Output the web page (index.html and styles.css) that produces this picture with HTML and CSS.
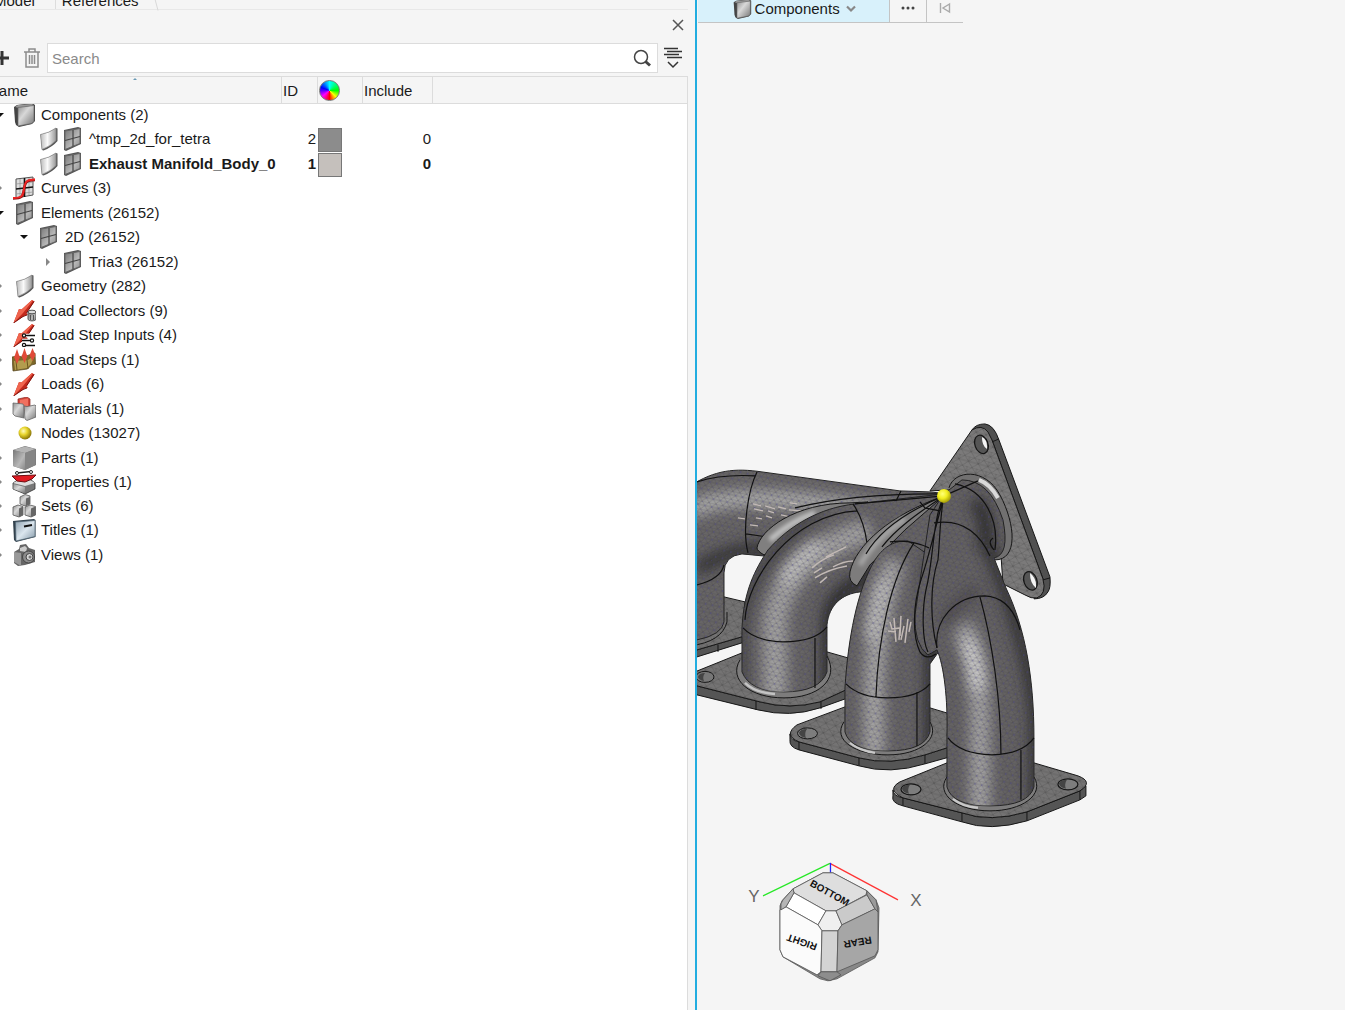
FILE: index.html
```html
<!DOCTYPE html>
<html lang="en">
<head>
  <meta charset="UTF-8">
  <meta name="viewport" content="width=device-width, initial-scale=1">
  <title>Model Browser</title>
  <link rel="stylesheet" href="styles.css">
</head>
<body>

<!-- icon sprite -->
<svg class="sprite" aria-hidden="true">
  <defs>
    <linearGradient id="steel" x1="0" y1="0" x2="1" y2="1">
      <stop offset="0" stop-color="#909090"/><stop offset=".4" stop-color="#d8d8d8"/><stop offset="1" stop-color="#747474"/>
    </linearGradient>
    <linearGradient id="plate" x1="0" y1="0" x2="1" y2="1">
      <stop offset="0" stop-color="#777"/><stop offset=".6" stop-color="#b8b8b8"/><stop offset="1" stop-color="#888"/>
    </linearGradient>
    <linearGradient id="sheet" x1="0" y1="0" x2="1" y2="0">
      <stop offset="0" stop-color="#bbb"/><stop offset=".45" stop-color="#fafafa"/><stop offset="1" stop-color="#999"/>
    </linearGradient>
    <linearGradient id="blue" x1="0" y1="0" x2="1" y2="1">
      <stop offset="0" stop-color="#8fa2b0"/><stop offset=".5" stop-color="#dbe6ee"/><stop offset="1" stop-color="#8296a5"/>
    </linearGradient>
    <radialGradient id="gold" cx=".38" cy=".35" r=".65">
      <stop offset="0" stop-color="#fffbc0"/><stop offset=".45" stop-color="#e8d52c"/><stop offset="1" stop-color="#8a7608"/>
    </radialGradient>
  </defs>
  <symbol id="i-component" viewBox="0 0 24 24">
    <path d="M2 4 5 2l15-2 3 2v16l-3 3-13 3-3-2-1-3z" fill="#444"/>
    <path d="M3 4l3-2L20 1l2 1.500L7 5z" fill="#999"/>
    <path d="M6 4.500 22 2.500v16L19.500 20.500 6 23z" fill="url(#steel)" stroke="#666" stroke-width=".7"/>
  </symbol>
  <symbol id="i-surface" viewBox="0 0 24 24">
    <path d="M4.500 7.500Q13 6 20 1l1.500.5V14q-5 6-14 9.500l-1.500-.5z" fill="#555"/>
    <path d="M4.500 7.500Q13 6 20 1v12.500q-5 5.500-14 9z" fill="url(#sheet)" stroke="#888" stroke-width=".7"/>
  </symbol>
  <symbol id="i-mesh" viewBox="0 0 24 24">
    <path d="M4 3 18 0l3 1v16L6 24l-2-1z" fill="#555"/>
    <path d="M5 4 20 1.500v15L5 22.500z" fill="url(#plate)" stroke="#666"/>
    <path d="M13 3v16.500M5 13.500l15-4" stroke="#444" stroke-width="1.200"/>
  </symbol>
  <symbol id="i-curve" viewBox="0 0 24 24">
    <path d="M4 3 21 1v18L4 22z" fill="#ddd" stroke="#555"/>
    <path d="M8 3v18M17 2v17M4 8l17-2M4 18l17-2" stroke="#999" stroke-width=".8"/>
    <path d="M12.500 2v19M4 13l17-2" stroke="#111" stroke-width="1.600"/>
    <path d="M1 22.500c9 0 10-2 11-9S14 4 23 4" fill="none" stroke="#811" stroke-width="2.600"/>
    <path d="M1 22c9 0 10-2 11-9S14 3.500 23 3.500" fill="none" stroke="#e22" stroke-width="1.800"/>
  </symbol>
  <symbol id="i-load" viewBox="0 0 24 24">
    <path d="M20 1l2.500 1.500L14.500 14l1.500 1.500-4 1.500L1.500 24 7 10l2.500.500z" fill="#c3291c"/>
    <path d="M20 1l1 .5L11 14 1.500 24 7 10l2.500.500z" fill="#f0654f"/>
    <path d="M22 2.500 14.500 14M15 16l-4 1.500L1.500 24" fill="none" stroke="#7d1510"/>
  </symbol>
  <symbol id="i-loadcol" viewBox="0 0 24 24">
    <use href="#i-load"/>
    <path d="M16 13v7c0 2.500 8 2.500 8 0v-7z" fill="url(#plate)" stroke="#555"/>
    <ellipse cx="20" cy="13" rx="4" ry="1.800" fill="#ddd" stroke="#555"/>
    <path d="M18.500 16v5M21.500 16v5" stroke="#555"/>
  </symbol>
  <symbol id="i-loadinput" viewBox="0 0 24 24">
    <use href="#i-load"/>
    <path d="M12 12.500h11M10 17.500h12M12 22.500h11" stroke="#fff" stroke-width="3.500"/>
    <path d="M12 12.500h11M10 17.500h12M12 22.500h11" stroke="#111" stroke-width="1.600"/>
    <g fill="#fff" stroke="#111" stroke-width="1.200"><circle cx="12" cy="12.500" r="1.600"/><circle cx="20" cy="17.500" r="1.600"/><circle cx="12" cy="22" r="1.600"/></g>
  </symbol>
  <symbol id="i-loadstep" viewBox="0 0 24 24">
    <path d="M0 9l5-1 6 1 6-2 6-2 .5 11-4 1-4 4L1 23z" fill="#7d6829" stroke="#55441a" stroke-width=".7"/>
    <path d="M2 13l14-1 7-5-4 9-4 4-12 2z" fill="#b39c4e"/>
    <path d="M15 12l1 9M4 13l1 9" stroke="#6b5720"/>
    <path d="M5 1l2 6 1 2-3 7-3-7 1-2zM12.500 0l2 6 1 2-3 7-3-7 1-2zM20.500 0l2 5 1 2-3 6-3-6 1-2z" fill="#e04a38"/>
  </symbol>
  <symbol id="i-material" viewBox="0 0 24 24">
    <path d="M6 2l9-2 3 2V14H6z" fill="#d4463a" stroke="#8b231c" stroke-width=".7"/>
    <path d="M8 3l8-1.500V9H8z" fill="#f0705f"/>
    <path d="M1 6l10 1 1 2v12l-9-2-2-2z" fill="url(#steel)" stroke="#666" stroke-width=".8"/>
    <path d="M12 9l3 .5 8-1.500 1 1v11l-9 3.500-2-1.500z" fill="url(#steel)" stroke="#666" stroke-width=".8"/>
  </symbol>
  <symbol id="i-node" viewBox="0 0 24 24"><circle cx="13" cy="12" r="6.500" fill="url(#gold)"/></symbol>
  <symbol id="i-part" viewBox="0 0 24 24">
    <path d="M1 4 13 0l11 3v16l-11 5L1 20z" fill="#777"/>
    <path d="M1 4 13 .5 23.500 3 13 7z" fill="#b4b4b4"/>
    <path d="M1 4l12 3v17L1 20z" fill="url(#plate)"/>
    <path d="M13 7l10.500-4v16L13 24z" fill="#858585"/>
  </symbol>
  <symbol id="i-property" viewBox="0 0 24 24">
    <path d="M1 13l6-4h11l5 4v6l-10 5-12-5z" fill="#777" stroke="#333" stroke-width=".8"/>
    <path d="M1 13l12 3 10-3-5-3H7z" fill="#ddd"/>
    <path d="M1.500 14 13 17v6.500L1.500 19z" fill="url(#steel)"/>
    <path d="M0 6l24-1-4 4-7 3-8-1z" fill="#e01b22" stroke="#6a0d10"/>
    <path d="M5 3l14-1.500" stroke="#222" stroke-width="1.500"/>
    <circle cx="5" cy="3" r="1.500" fill="#fff" stroke="#222"/><circle cx="19" cy="2" r="1.500" fill="#fff" stroke="#222"/>
  </symbol>
  <symbol id="i-set" viewBox="0 0 24 24">
    <g stroke="#555" stroke-width=".8">
      <path d="M8 3l5-2.500 5 1.500V10l-5 2-5-2z" fill="url(#steel)"/>
      <path d="M1 13l5-2 5 1.500V21l-4 2-6-2z" fill="url(#steel)"/>
      <path d="M13 13l5-2 5.500 1.500V21L19 23l-6-2z" fill="url(#steel)"/>
    </g>
    <path d="M14 4.500 18 3v7l-4 2zM7 14.500l4-2V21l-4 2zM19 14.500l4.500-2V21L19 23z" fill="#666"/>
  </symbol>
  <symbol id="i-title" viewBox="0 0 24 24">
    <path d="M1 3 22 1l1.500 1v17L4 24l-2-2z" fill="#33424d"/>
    <path d="M3.500 4 23 2.500v16L4 23z" fill="url(#blue)" stroke="#536776" stroke-width=".7"/>
    <path d="M12 8.500l8-1.500" stroke="#111" stroke-width="2.200"/>
  </symbol>
  <symbol id="i-view" viewBox="0 0 24 24">
    <path d="M2 9l5-3 1-4 6-1 3 4 6 2v12l-10 3L6 23l-4-3z" fill="#666"/>
    <path d="M2 9l7 1v13l-7-4z" fill="#999"/>
    <path d="M8 5l5-2 2 2-1 4-6-1z" fill="#ccc"/>
    <circle cx="16.500" cy="14" r="6" fill="#8c8c8c" stroke="#444"/>
    <circle cx="17.500" cy="14" r="3.500" fill="#d5d5d5" stroke="#444"/>
    <circle cx="18" cy="14" r="1.500" fill="#777"/>
  </symbol>
</svg>

<div class="app">
  <section class="browser">
    <nav class="tabs">
      <button type="button" class="tab tab-active">Model</button>
      <button type="button" class="tab">References</button>
      <svg class="tab-edge" width="10" height="31" viewBox="0 0 10 31"><path d="M1 0l8 30.500" fill="none" stroke="#d8d8d8"/></svg>
    </nav>
    <div class="titlebar">
      <button type="button" class="icon-btn" aria-label="Close">
        <svg width="12" height="12" viewBox="0 0 12 12"><path d="M1 1l10 10M11 1 1 11" stroke="#555" stroke-width="1.500"/></svg>
      </button>
    </div>
    <div class="search-row">
      <button type="button" class="icon-btn" aria-label="Create">
        <svg width="20" height="20" viewBox="0 0 20 20"><path d="M3 10h14M10 3v14" stroke="#333" stroke-width="3"/></svg>
      </button>
      <button type="button" class="icon-btn" aria-label="Delete">
        <svg width="18" height="20" viewBox="0 0 18 20" fill="none" stroke="#8c8c8c" stroke-width="1.500"><path d="M1 4h16M6 4V1h6v3M3 4v15h12V4M6.500 7v9M9 7v9M11.500 7v9"/></svg>
      </button>
      <div class="search-box">
        <input type="text" class="search-input" placeholder="Search" aria-label="Search">
        <svg width="18" height="18" viewBox="0 0 18 18" fill="none" stroke="#444"><circle cx="8" cy="8" r="6.500" stroke-width="1.500"/><path d="M12.500 12.500l4.500 4" stroke-width="3"/></svg>
      </div>
      <button type="button" class="icon-btn" aria-label="Filter">
        <svg width="18" height="22" viewBox="0 0 18 22" fill="none" stroke="#333" stroke-width="1.500"><path d="M0 1.500h14M3 4.500h15M0 7.500h15M3 10.500h15M4 15l5 5 5-5"/></svg>
      </button>
    </div>
    <div class="tree-pane">
      <table class="tree">
        <colgroup><col class="col-name"><col class="col-id"><col class="col-color"><col class="col-include"><col></colgroup>
        <thead>
          <tr>
            <th class="th-name">Name<span class="sort-mark"></span></th>
            <th>ID</th>
            <th aria-label="Color"><span class="color-wheel"></span></th>
            <th>Include</th>
            <th></th>
          </tr>
        </thead>
        <tbody>
          <tr><td><div class="node"><i class="arrow arrow-open"></i><svg class="icon"><use href="#i-component"/></svg><span class="label">Components (2)</span></div></td><td></td><td></td><td></td><td></td></tr>
          <tr><td><div class="node level-1"><i class="arrow"></i><svg class="icon"><use href="#i-surface"/></svg><svg class="icon"><use href="#i-mesh"/></svg><span class="label">^tmp_2d_for_tetra</span></div></td><td class="num">2</td><td><span class="swatch swatch-gray"></span></td><td class="num">0</td><td></td></tr>
          <tr class="current"><td><div class="node level-1"><i class="arrow"></i><svg class="icon"><use href="#i-surface"/></svg><svg class="icon"><use href="#i-mesh"/></svg><span class="label">Exhaust Manifold_Body_0</span></div></td><td class="num">1</td><td><span class="swatch swatch-tan"></span></td><td class="num">0</td><td></td></tr>
          <tr><td><div class="node"><i class="arrow arrow-closed"></i><svg class="icon"><use href="#i-curve"/></svg><span class="label">Curves (3)</span></div></td><td></td><td></td><td></td><td></td></tr>
          <tr><td><div class="node"><i class="arrow arrow-open"></i><svg class="icon"><use href="#i-mesh"/></svg><span class="label">Elements (26152)</span></div></td><td></td><td></td><td></td><td></td></tr>
          <tr><td><div class="node level-1"><i class="arrow arrow-open"></i><svg class="icon"><use href="#i-mesh"/></svg><span class="label">2D (26152)</span></div></td><td></td><td></td><td></td><td></td></tr>
          <tr><td><div class="node level-2"><i class="arrow arrow-closed"></i><svg class="icon"><use href="#i-mesh"/></svg><span class="label">Tria3 (26152)</span></div></td><td></td><td></td><td></td><td></td></tr>
          <tr><td><div class="node"><i class="arrow arrow-closed"></i><svg class="icon"><use href="#i-surface"/></svg><span class="label">Geometry (282)</span></div></td><td></td><td></td><td></td><td></td></tr>
          <tr><td><div class="node"><i class="arrow arrow-closed"></i><svg class="icon"><use href="#i-loadcol"/></svg><span class="label">Load Collectors (9)</span></div></td><td></td><td></td><td></td><td></td></tr>
          <tr><td><div class="node"><i class="arrow arrow-closed"></i><svg class="icon"><use href="#i-loadinput"/></svg><span class="label">Load Step Inputs (4)</span></div></td><td></td><td></td><td></td><td></td></tr>
          <tr><td><div class="node"><i class="arrow arrow-closed"></i><svg class="icon"><use href="#i-loadstep"/></svg><span class="label">Load Steps (1)</span></div></td><td></td><td></td><td></td><td></td></tr>
          <tr><td><div class="node"><i class="arrow arrow-closed"></i><svg class="icon"><use href="#i-load"/></svg><span class="label">Loads (6)</span></div></td><td></td><td></td><td></td><td></td></tr>
          <tr><td><div class="node"><i class="arrow arrow-closed"></i><svg class="icon"><use href="#i-material"/></svg><span class="label">Materials (1)</span></div></td><td></td><td></td><td></td><td></td></tr>
          <tr><td><div class="node"><i class="arrow"></i><svg class="icon"><use href="#i-node"/></svg><span class="label">Nodes (13027)</span></div></td><td></td><td></td><td></td><td></td></tr>
          <tr><td><div class="node"><i class="arrow arrow-closed"></i><svg class="icon"><use href="#i-part"/></svg><span class="label">Parts (1)</span></div></td><td></td><td></td><td></td><td></td></tr>
          <tr><td><div class="node"><i class="arrow arrow-closed"></i><svg class="icon"><use href="#i-property"/></svg><span class="label">Properties (1)</span></div></td><td></td><td></td><td></td><td></td></tr>
          <tr><td><div class="node"><i class="arrow arrow-closed"></i><svg class="icon"><use href="#i-set"/></svg><span class="label">Sets (6)</span></div></td><td></td><td></td><td></td><td></td></tr>
          <tr><td><div class="node"><i class="arrow arrow-closed"></i><svg class="icon"><use href="#i-title"/></svg><span class="label">Titles (1)</span></div></td><td></td><td></td><td></td><td></td></tr>
          <tr><td><div class="node"><i class="arrow arrow-closed"></i><svg class="icon"><use href="#i-view"/></svg><span class="label">Views (1)</span></div></td><td></td><td></td><td></td><td></td></tr>
        </tbody>
      </table>
    </div>
  </section>

  <main class="viewport">
    <div class="toolbar">
      <button type="button" class="tool tool-entity">
        <svg class="tool-icon"><use href="#i-component"/></svg>
        Components
        <svg width="10" height="8" viewBox="0 0 10 8"><path d="M1 1.500l4 4 4-4" fill="none" stroke="#888" stroke-width="2.200"/></svg>
      </button>
      <button type="button" class="tool" aria-label="More options">
        <svg width="14" height="4" viewBox="0 0 14 4" fill="#444"><circle cx="2" cy="2" r="1.500"/><circle cx="7" cy="2" r="1.500"/><circle cx="12" cy="2" r="1.500"/></svg>
      </button>
      <button type="button" class="tool" aria-label="Reset selection">
        <svg width="12" height="12" viewBox="0 0 12 12" fill="none" stroke="#aaa" stroke-width="1.400"><path d="M1.500 1v10M10.500 2 4 6l6.500 4z"/></svg>
      </button>
    </div>

    <svg class="canvas" viewBox="697 23 648 987" preserveAspectRatio="xMinYMin meet">
      <defs>
        <pattern id="mesh" width="7" height="8" patternUnits="userSpaceOnUse" patternTransform="rotate(12)">
          <path d="M0 0h7M0 4h7M0 0l3.500 4L7 0M0 8l3.500-4L7 8" fill="none" stroke="#2c2a2a" stroke-width=".5" opacity=".45"/>
          <path d="M3 4h1.500M0 0h1" stroke="#5b52c8" stroke-width=".9" opacity=".6"/>
        </pattern>
        <pattern id="mesh-flat" width="10" height="10" patternUnits="userSpaceOnUse" patternTransform="rotate(15)">
          <path d="M0 0h10M0 5h10M0 0l5 5 5-5M0 10l5-5 5 5M5 0v5" fill="none" stroke="#333" stroke-width=".5" opacity=".45"/>
        </pattern>
        <radialGradient id="ball" cx=".4" cy=".35" r=".65">
          <stop offset="0" stop-color="#ffff7a"/><stop offset=".5" stop-color="#f2ee20"/><stop offset="1" stop-color="#a39b0a"/>
        </radialGradient>
        <filter id="soft" filterUnits="userSpaceOnUse" x="640" y="400" width="500" height="500"><feGaussianBlur stdDeviation="7"/></filter>
        <filter id="soft-thin" filterUnits="userSpaceOnUse" x="640" y="400" width="500" height="500"><feGaussianBlur stdDeviation="2"/></filter>

        <path id="outlet-face" d="M930 491 972 430Q982 424 988 432L992 440 1043 579Q1047 594 1037 598 1031 599 1025 595L1003 584 1000 540 985 500 950 490z"/>
        <path id="flange-a" d="M690 590 724 597 745 602V636L697 650H690z"/>
        <path id="flange-b" d="M690 674 742 653 827 652 848 658V689L820 702Q790 710 760 702L697 686z"/>
        <path id="flange-c" d="M797 725 845 707 930 708 950 714V747L925 755Q890 766 859 758L799 742Q783 735 797 725z"/>
        <path id="flange-d" d="M900 782 947 763 1034 763 1078 776Q1094 782 1080 791L1027 812Q990 823 962 813L903 798Q886 790 900 782z"/>

        <path id="pipe-a" d="M690 486C715 470 735 468 762 472L900 491 930 492 948 494 900 530 763 556 742 554Q724 556 724 573V622Q722 635 697 640H690z"/>
        <path id="pipe-b" d="M742 672V628C744 590 755 570 768 550 790 525 820 508 855 504L944 494 925 560 880 592 860 592C842 594 829 605 827 625V672Q820 692 784 692 750 692 742 672z"/>
        <path id="pipe-c" d="M845 732V688C848 640 857 590 875 560 885 545 895 541 908 541L936 560 940 650 930 664V732Q925 751 888 751 850 751 845 732z"/>
        <path id="pipe-d" d="M947 787V735C948 700 944 665 937 650L928 655Q914 645 915 615L930 515 944 494 962 480Q990 480 1003 520 1010 555 994 558L1006 588C1026 630 1034 680 1034 738V787Q1029 806 990 806 952 806 947 787z"/>
        <clipPath id="clip-a"><use href="#pipe-a"/></clipPath>
        <clipPath id="clip-b"><use href="#pipe-b"/></clipPath>
        <clipPath id="clip-c"><use href="#pipe-c"/></clipPath>
        <clipPath id="clip-d"><use href="#pipe-d"/></clipPath>
      </defs>

      <!-- outlet flange -->
      <g stroke="#161616" stroke-linejoin="round">
        <path d="M972 430Q976 424 985 424 994 425 999 440L1050 577Q1051 588 1048 592 1044 599 1034 599L1043 579 992 440z" fill="#505050"/>
        <use href="#outlet-face" fill="#7b7a7a"/>
        <path d="M992 442l7-3M1043 580l7-2" fill="none"/>
      </g>
      <use href="#outlet-face" fill="url(#mesh-flat)"/>
      <g fill="#555" stroke="#161616" stroke-width="1.300">
        <ellipse cx="981.500" cy="444.500" rx="6.500" ry="9.500" transform="rotate(-20 981.500 444.500)"/>
        <ellipse cx="1030.500" cy="581" rx="6.500" ry="9.500" transform="rotate(-20 1030.500 581)"/>
      </g>
      <path d="M982 437q6 3 5 12-5-3-5-12zM1030 573q7 5 6 15-6-5-6-15z" fill="#f5f5f5"/>
      <path d="M949 488C954 470 985 467 1000 495 1016 525 1018 560 995 560" fill="#717070" stroke="#161616"/>

      <!-- inlet flanges, back to front, each followed by its runner -->
      <path d="M690 650h7l48-14v6l-48 15h-7z" fill="#555" stroke="#161616"/>
      <use href="#flange-a" fill="#747373" stroke="#161616"/>
      <use href="#flange-a" fill="url(#mesh-flat)"/>
      <path d="M690 646Q722 642 727 622V612" fill="none" stroke="#161616"/>
      <path d="M718 645v7" stroke="#161616"/>

      <use href="#pipe-a" fill="#676566" stroke="#222"/>
      <g clip-path="url(#clip-a)">
        <path d="M690 512Q730 480 950 525" fill="none" stroke="#aaa" stroke-width="18" filter="url(#soft)"/>
        <path d="M697 570Q740 540 790 555" fill="none" stroke="#333" stroke-width="14" filter="url(#soft)"/>
        <use href="#pipe-a" fill="url(#mesh)"/>
      </g>
      <path d="M757 472C748 490 742 530 748 553M746 534l21 3M697 482q25-8 58-6M697 585q24-6 27-20" fill="none" stroke="#111" stroke-width="1.200"/>
      <path d="M753 504l8 2M754 509l9 2M765 506l10 3M768 511l6 2M778 507l8 2M781 515l9 2M756 518l6 1M766 516l6 2M789 510l12 1M738 518l7 1M750 525l8 1M790 503l7 1" stroke="#c2b9b5" stroke-width="1.400"/>

      <path d="M690 683 697 686 760 702Q790 710 820 702L848 689V698L820 708Q790 718 758 710L697 695z" fill="#555" stroke="#161616"/>
      <use href="#flange-b" fill="#747373" stroke="#161616"/>
      <use href="#flange-b" fill="url(#mesh-flat)"/>
      <ellipse cx="705" cy="677" rx="9" ry="5.500" fill="#777" stroke="#161616"/>
      <path d="M698 677q1-4 7-4-3 4-1 8-5-1-6-4z" fill="#444"/>
      <path d="M756 701v9M821 702v7" stroke="#161616"/>
      <path d="M740 660C728 680 750 698 784 698S840 680 827 656" fill="#7d7c7c" stroke="#161616"/>
      <path d="M745 683Q755 693 775 694" fill="none" stroke="#c4c4c4" stroke-width="2.500"/>
      <path d="M764 555Q757 551 757 548C760 530 795 503 850 503L868 502 790 540z" fill="#807f7f" stroke="#161616"/>
      <path d="M770 540Q790 522 815 513" fill="none" stroke="#c9c9c9" stroke-width="5" filter="url(#soft-thin)"/>

      <use href="#pipe-b" fill="#666465" stroke="#222"/>
      <g clip-path="url(#clip-b)">
        <path d="M775 700V620Q785 555 870 530" fill="none" stroke="#a3a2a2" stroke-width="24" filter="url(#soft)"/>
        <path d="M784 582Q795 558 820 544" fill="none" stroke="#d5d5d5" stroke-width="9" filter="url(#soft)"/>
        <path d="M830 700V620Q830 590 885 570" fill="none" stroke="#2c2b2c" stroke-width="16" filter="url(#soft)"/>
        <path d="M741 700V625Q750 560 820 510" fill="none" stroke="#333" stroke-width="7" filter="url(#soft)"/>
        <use href="#pipe-b" fill="url(#mesh)"/>
      </g>
      <path d="M743 628Q755 641 783 642 815 642 827 627M745 620C747 580 790 515 857 511M815 638v50M853 504Q864 520 867 543M795 508q60-15 149-14" fill="none" stroke="#111" stroke-width="1.200"/>
      <path d="M812 568q10-9 22-13M815 578q14-9 32-12M826 557l20-10M833 567q11-6 20-6M814 573l8-5M820 583l7-6" fill="none" stroke="#c2b9b5" stroke-width="1.500"/>

      <path d="M790 734Q790 740 799 742L859 758Q890 766 925 755L950 747V757L925 764Q890 775 859 766L799 750Q789 747 790 740z" fill="#555" stroke="#161616"/>
      <use href="#flange-c" fill="#747373" stroke="#161616"/>
      <use href="#flange-c" fill="url(#mesh-flat)"/>
      <ellipse cx="807.500" cy="733.500" rx="10" ry="5.500" fill="#7d7d7d" stroke="#161616"/>
      <path d="M799 733q1-4 8-4-3 4-1 9-6-1-7-5z" fill="#444"/>
      <path d="M799 742v8M859 758v8M925 755v9" stroke="#161616"/>
      <path d="M844 722C832 740 855 755 888 755S940 738 930 722" fill="#7d7c7c" stroke="#161616"/>
      <path d="M850 743Q860 751 875 753" fill="none" stroke="#c9c9c9" stroke-width="2.500"/>
      <path d="M857 586Q848 582 850 572C856 545 890 515 944 496L905 530 870 565z" fill="#7d7c7c" stroke="#161616"/>
      <path d="M860 565Q876 538 905 519" fill="none" stroke="#a9a9a9" stroke-width="5" filter="url(#soft-thin)"/>

      <use href="#pipe-c" fill="#666465" stroke="#222"/>
      <g clip-path="url(#clip-c)">
        <path d="M874 760V690Q876 620 895 560" fill="none" stroke="#a9a8a8" stroke-width="20" filter="url(#soft)"/>
        <path d="M871 640Q874 600 884 580" fill="none" stroke="#d5d5d5" stroke-width="8" filter="url(#soft)"/>
        <path d="M932 760V560" fill="none" stroke="#2c2b2c" stroke-width="14" filter="url(#soft)"/>
        <use href="#pipe-c" fill="url(#mesh)"/>
      </g>
      <path d="M846 684Q860 698 888 698 918 698 930 684M917 692v54M876 697C878 640 890 580 914 543" fill="none" stroke="#111" stroke-width="1.200"/>
      <path d="M890 622l2 7 8-1-1 12M894 618l2 24M901 616l-1 20M904 626l-3 14M908 619l-3 24M888 631l8 1M911 622l-2 10" fill="none" stroke="#c2b9b5" stroke-width="1.500"/>

      <path d="M893 790Q893 796 903 798L962 813Q990 823 1027 812L1080 791 1086 786V796L1080 800 1027 821Q990 832 962 822L903 806Q891 803 893 796z" fill="#555" stroke="#161616"/>
      <use href="#flange-d" fill="#747373" stroke="#161616"/>
      <use href="#flange-d" fill="url(#mesh-flat)"/>
      <g fill="#7d7d7d" stroke="#161616" stroke-width="1.200">
        <ellipse cx="911" cy="789.500" rx="10" ry="5.500"/>
        <ellipse cx="1068" cy="784.500" rx="10" ry="5.500"/>
      </g>
      <path d="M902 789q1-4 8-4-3 4-1 9-6-1-7-5zM1059 784q1-4 8-4-3 4-1 9-6-1-7-5z" fill="#444"/>
      <path d="M903 798v8M962 813v9M1027 812v9M1080 791v9" stroke="#161616"/>
      <path d="M947 777C935 795 958 811 990 811S1045 795 1034 777" fill="#7d7c7c" stroke="#161616"/>
      <path d="M953 799Q963 807 978 808" fill="none" stroke="#c9c9c9" stroke-width="2.500"/>

      <!-- collector body with the front runner -->
      <use href="#pipe-d" fill="#646263" stroke="#222"/>
      <g clip-path="url(#clip-d)">
        <path d="M980 820V740Q982 660 962 625" fill="none" stroke="#a5a4a5" stroke-width="20" filter="url(#soft)"/>
        <path d="M978 690Q976 660 966 640" fill="none" stroke="#e0e0e0" stroke-width="10" filter="url(#soft)"/>
        <path d="M1036 820V720Q1030 640 985 540" fill="none" stroke="#2c2b2c" stroke-width="12" filter="url(#soft)"/>
        <path d="M980 590Q960 595 942 625" fill="none" stroke="#3a393b" stroke-width="6" filter="url(#soft)"/>
        <path d="M975 500Q990 520 985 545" fill="none" stroke="#2c2b2c" stroke-width="14" filter="url(#soft)"/>
        <use href="#pipe-d" fill="url(#mesh)"/>
      </g>
      <path d="M979 480Q990 484 998 498" fill="none" stroke="#d9d9d9" stroke-width="4"/>
      <g fill="none" stroke="#111" stroke-width="1.200">
        <path d="M948 738Q960 754 992 755 1023 754 1034 738M1021 750v50M1001 754C1001 700 992 640 980 597"/>
        <path d="M937 648C934 620 955 596 985 596 1002 597 1014 608 1020 630"/>
        <path d="M955 484C985 490 999 520 995 550M934 523Q972 517 990 556M994 550Q987 542 993 538"/>
        <path d="M944 496C940 515 940 540 938 560 930 585 930 620 937 648M944 496C935 530 928 560 921 580 913 605 912 635 920 652Q926 661 936 654M944 496C932 520 934 560 926 590 922 610 922 640 928 652"/>
        <path d="M944 496C910 510 880 530 866 554M944 496C915 515 895 530 882 547M944 496l34-15M944 496 855 504M890 542Q910 539 929 548M896 501l5-10M920 502l5 6 15 3"/>
      </g>
      <circle cx="944" cy="496" r="7" fill="url(#ball)"/>

      <!-- view cube -->
      <path d="M830 863.500 763 896" stroke="#27e827" stroke-width="1.200"/>
      <path d="M830 863.500 898 900" stroke="#f33" stroke-width="1.200"/>
      <path d="M830.500 863v11" stroke="#22f" stroke-width="1.300"/>
      <g stroke="#555" stroke-width=".8" stroke-linejoin="round">
        <path d="M823 873h10l34 18 9 9 3 8-1 44-3 6-38 21-9 2-8-2-37-22-3-7V906l2-5 11-12z" fill="#888"/>
        <path d="M823 873h10l34 18-1 4-30 16h-10l-32-18-1-4z" fill="#dedede"/>
        <path d="M794 893l32 18-8 14-32-18z" fill="#fff"/>
        <path d="M826 911h10l6 14-4 6h-16l-4-6z" fill="#efefef"/>
        <path d="M836 911l31-16 8 14-33 16z" fill="#cacaca"/>
        <path d="M786 907l32 18 4 6-1 41-4 3-34-18-3-7v-40z" fill="#fbfbfb"/>
        <path d="M822 931h16l-1 41h-16z" fill="#d3d3d3"/>
        <path d="M842 925l33-16 3 3v38l-3 6-38 16 1-41z" fill="#a6a6a6"/>
        <path d="M821 972h16l4 3-11 6-12-5z" fill="#8d8d8d"/>
        <path d="M793 889l1 4-8 14-5 3v-6l2-4z" fill="#b5b5b5"/>
        <path d="M867 891l9 9 2 12-3-3-8-14z" fill="#9a9a9a"/>
      </g>
      <g class="cube-text" text-anchor="middle">
        <text transform="translate(828 896) rotate(29)">BOTTOM</text>
        <text transform="translate(803 939) rotate(199)">RIGHT</text>
        <text transform="translate(857 939) rotate(170)">REAR</text>
      </g>
      <g class="axis-text" text-anchor="middle">
        <text x="754" y="902">Y</text>
        <text x="916" y="906">X</text>
      </g>
    </svg>
  </main>
</div>

</body>
</html>
```
FILE: styles.css
```css
* {
  box-sizing: border-box;
}

body {
  margin: 0;
  height: 100vh;
  overflow: hidden;
  background: #f5f5f5;
  color: #1a1a1a;
  font-family: "Liberation Sans", Arial, sans-serif;
  font-size: 15px;
}

button {
  margin: 0;
  padding: 0;
  border: none;
  background: none;
  color: inherit;
  font: inherit;
  cursor: pointer;
}

.sprite {
  position: absolute;
  width: 0;
  height: 0;
}

/* the window runs past the top left corner */
.app {
  display: flex;
  height: calc(100vh + 20px);
  margin: -20px 0 0 -16px;
}

/* browser panel */
.browser {
  display: flex;
  flex-direction: column;
  flex: 0 0 52.25%;
  min-width: 0;
  padding-right: 7px;
}

.tabs {
  display: flex;
  height: 30px;
  border-bottom: 1px solid #e8e8e8;
}

.tab {
  padding: 12px 10px 0 6px;
  line-height: 18px;
}

.tab-active {
  padding: 12px 20px 0 10px;
  border-right: 1px solid #ddd;
}

.titlebar {
  display: flex;
  justify-content: flex-end;
  align-items: center;
  height: 33px;
  padding: 0 4px 4px 0;
}

.icon-btn {
  display: flex;
}

.search-row {
  display: flex;
  align-items: center;
  height: 33px;
  padding: 0 6px 3px 8px;
  gap: 6px;
}

.search-row .icon-btn:nth-child(2) {
  margin: 0 0 0 5px;
}

.search-box {
  display: flex;
  align-items: center;
  flex: 1;
  height: 30px;
  padding: 0 6px 0 4px;
  border: 1px solid #dcdcdc;
  background: #fff;
}

.search-input {
  flex: 1;
  min-width: 0;
  padding: 0;
  border: none;
  outline: none;
  background: none;
  font: inherit;
}

.search-input::placeholder {
  color: #8a8a8a;
}

.tree-pane {
  flex: 1;
  border-right: 1px solid #dcdcdc;
  background: #fff;
}

.tree {
  width: 100%;
  table-layout: fixed;
  border-collapse: separate;
  border-spacing: 0;
}

.col-name { width: 298px; }
.col-id { width: 36px; }
.col-color { width: 45px; }
.col-include { width: 70px; }

.tree th {
  height: 28px;
  padding: 0 1px;
  border: solid #dcdcdc;
  border-width: 1px 1px 1px 0;
  background: #f5f5f5;
  font-weight: normal;
  text-align: left;
}

.tree th:last-child {
  border-right: none;
}

.tree .th-name {
  position: relative;
  padding-left: 4px;
}

.sort-mark {
  position: absolute;
  top: 1px;
  left: 50%;
  border: 2px solid transparent;
  border-top: none;
  border-bottom-color: #6a9ab5;
}

.color-wheel {
  display: block;
  width: 21px;
  height: 21px;
  border: 1px solid #777;
  border-radius: 50%;
  background: conic-gradient(#0ff, #0f0 90deg, #ff0 135deg, #f00 180deg, #f0f 230deg, #00f 290deg, #0ff);
}

.tree td {
  height: 24px;
  padding: 0;
  line-height: 22px;
  vertical-align: top;
}

.tree tbody tr:nth-child(even):not(:nth-child(16)) td {
  height: 25px;
}

.tree .num {
  padding-right: 2px;
  text-align: right;
}

.current {
  font-weight: bold;
}

.node {
  display: flex;
  align-items: center;
  height: 22px;
  padding-left: 8px;
  white-space: nowrap;
}

.level-1 { padding-left: 32px; }
.level-2 { padding-left: 56px; }

.arrow {
  display: flex;
  justify-content: center;
  width: 16px;
  margin-right: 4px;
}

.arrow-open::before {
  content: "";
  border: 4px solid transparent;
  border-top-color: #111;
  border-bottom: none;
}

.arrow-closed::before {
  content: "";
  border: 4px solid transparent;
  border-left-color: #888;
  border-right: none;
}

.icon {
  width: 24px;
  height: 24px;
}

.label {
  margin-left: 5px;
}

.swatch {
  display: block;
  width: 24px;
  height: 24px;
  border: 1px solid #777;
}

.swatch-gray { background: #8c8c8c; }
.swatch-tan { background: #c5c0bc; }

/* 3D view */
.viewport {
  display: flex;
  flex-direction: column;
  flex: 1;
  min-width: 0;
  border-left: 2px solid #22ade0;
}

.toolbar {
  display: flex;
  height: 43px;
  padding-left: 1px;
}

.tool {
  display: flex;
  justify-content: center;
  align-items: center;
  width: 37px;
  padding-top: 13px;
  border: solid #c4c4c4;
  border-width: 0 1px 1px 0;
}

.tool:last-child {
  width: 36px;
  border-right: none;
}

.tool-entity {
  gap: 6px;
  width: 192px;
  padding-top: 15px;
  background: #d8f1fb;
}

.tool-icon {
  width: 20px;
  height: 20px;
  margin-right: -3px;
}

.canvas {
  display: block;
  flex: 1;
  width: 100%;
  min-height: 0;
}

.cube-text {
  fill: #111;
  font-size: 10px;
  font-weight: bold;
}

.axis-text {
  fill: #666;
  font-size: 17px;
}
```
